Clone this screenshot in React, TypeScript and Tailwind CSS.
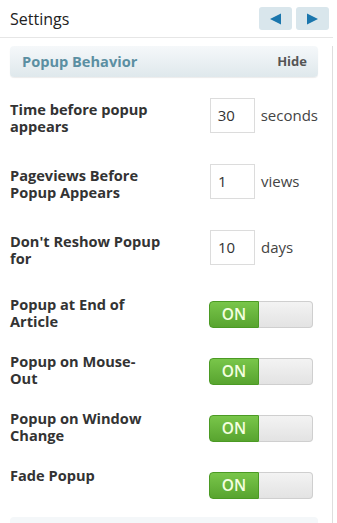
import React from "react";

const font = { fontFamily: '"Open Sans", "Noto Sans", sans-serif' };

function InputRow({ label, value, unit }: { label: React.ReactNode; value: string; unit: string }) {
  return (
    <div className="flex items-start h-[66px]">
      <div className="w-[200px] pt-[3px] text-[14.6px] leading-[17px] font-bold text-[#333]">{label}</div>
      <div className="w-[45px] h-[35px] border border-[#dcdcdc] bg-white flex items-center pl-[7px] text-[15px] text-[#333]">
        {value}
      </div>
      <div className="ml-[6px] h-[35px] flex items-center text-[15px] text-[#444]">{unit}</div>
    </div>
  );
}

function Toggle() {
  return (
    <div className="flex w-[104px] h-[27px] mt-[5px]">
      <div className="w-[50px] h-full rounded-l-[4px] bg-gradient-to-b from-[#79c64a] to-[#58a42f] border border-[#4b9a24] flex items-center justify-center text-[15.5px] font-semibold text-[#f4ffe0]">
        ON
      </div>
      <div className="flex-1 h-full rounded-r-[4px] bg-gradient-to-b from-[#f3f3f3] to-[#e3e3e3] border border-l-0 border-[#cfcfcf]" />
    </div>
  );
}

function ToggleRow({ label, h }: { label: React.ReactNode; h: string }) {
  return (
    <div className={`flex items-start ${h}`}>
      <div className="w-[199px] text-[14.6px] leading-[17px] font-bold text-[#333]">{label}</div>
      <Toggle />
    </div>
  );
}

export default function App() {
  return (
    <div className="w-[337px] h-[523px] bg-white overflow-hidden" style={font}>
      <div className="flex items-center justify-between h-[38px] border-b border-[#e6e6e6] pl-[10px] pr-[4px] w-[333px]">
        <span className="text-[16px] text-[#222]">Settings</span>
        <div className="flex gap-[4px]">
          <button className="w-[33px] h-[23px] rounded-[3px] bg-[#d9e6ec] flex items-center justify-center">
            <svg width="13" height="12" viewBox="0 0 13 12">
              <path d="M12 0.5 L1 6 L12 11.5 Z" fill="#1a76ad" />
            </svg>
          </button>
          <button className="w-[33px] h-[23px] rounded-[3px] bg-[#d9e6ec] flex items-center justify-center">
            <svg width="13" height="12" viewBox="0 0 13 12">
              <path d="M1 0.5 L12 6 L1 11.5 Z" fill="#1a76ad" />
            </svg>
          </button>
        </div>
      </div>
      <div className="w-[333px] border-r border-[#dedede] h-[485px] pl-[10px] pr-[14px]">
        <div className="mt-[8px] h-[31px] rounded-[4px] bg-gradient-to-b from-[#f5f8fa] to-[#dfe8ec] shadow-[0_1px_1px_rgba(0,0,0,0.08)] flex items-center justify-between pl-[12px] pr-[11px]">
          <span className="text-[14.6px] font-bold text-[#5b8fa2]">Popup Behavior</span>
          <span className="text-[13px] font-bold text-[#555]">Hide</span>
        </div>
        <div className="mt-[21px]">
          <InputRow label={<>Time before popup<br />appears</>} value="30" unit="seconds" />
          <InputRow label={<>Pageviews Before<br />Popup Appears</>} value="1" unit="views" />
          <InputRow label={<>Don't Reshow Popup<br />for</>} value="10" unit="days" />
          <ToggleRow label={<>Popup at End of<br />Article</>} h="h-[57px]" />
          <ToggleRow label={<>Popup on Mouse-<br />Out</>} h="h-[57px]" />
          <ToggleRow label={<>Popup on Window<br />Change</>} h="h-[57px]" />
          <ToggleRow label={<>Fade Popup</>} h="h-[50px]" />
        </div>
        <div className="h-[31px] rounded-[4px] bg-[#f4f7f9]" />
      </div>
    </div>
  );
}
